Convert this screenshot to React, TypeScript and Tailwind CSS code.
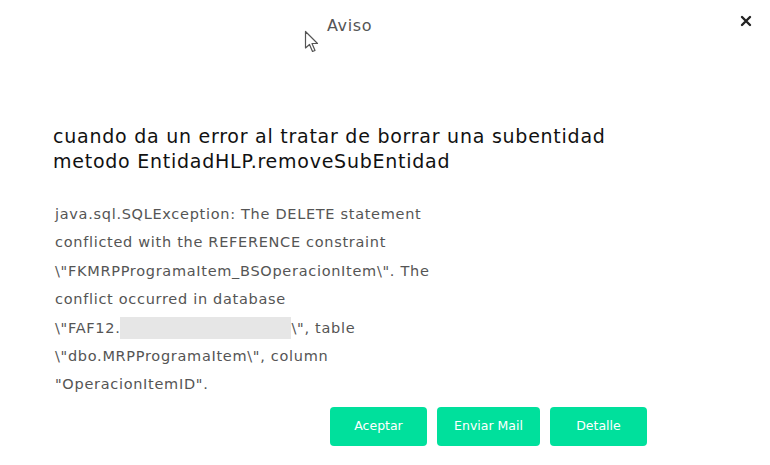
export default function App() {
  return (
    <div className="w-[770px] h-[465px] bg-white overflow-hidden" style={{ fontFamily: '"DejaVu Sans", sans-serif' }}>
      {/* header */}
      <div className="flex items-start h-[60px] pt-[14px]">
        <div className="w-[304px]" />
        <div className="flex items-start">
          <svg width="17" height="24" viewBox="0 0 17 24" className="mt-[16px]">
            <path d="M1.5 1.5 L1.5 18 L5.5 14.5 L8.5 21.5 L11 20.5 L8 13.5 L13.5 13.5 Z" fill="white" stroke="#555" strokeWidth="1.2" strokeLinejoin="round" />
          </svg>
          <span className="ml-[6px] text-[16px] tracking-[0.6px] text-[#555] leading-[24px]">Aviso</span>
        </div>
        <div className="flex-1" />
        <button className="mr-[18px] mt-[1px] text-[#222]">
          <svg width="12" height="12" viewBox="0 0 12 12">
            <path d="M2 2 L10 10 M10 2 L2 10" stroke="#222" strokeWidth="2.4" strokeLinecap="round" />
          </svg>
        </button>
      </div>

      {/* title */}
      <div className="pl-[53px] pt-[64px] text-[19px] tracking-[0.75px] leading-[25px] text-[#111]">
        <div>cuando da un error al tratar de borrar una subentidad</div>
        <div>metodo EntidadHLP.removeSubEntidad</div>
      </div>

      {/* body */}
      <div className="pl-[55px] pt-[26px] text-[14.5px] tracking-[0.7px] leading-[28.4px] text-[#555]">
        <div>java.sql.SQLException: The DELETE statement</div>
        <div>conflicted with the REFERENCE constraint</div>
        <div>\"FKMRPProgramaItem_BSOperacionItem\". The</div>
        <div>conflict occurred in database</div>
        <div className="flex items-center">
          <span>\"FAF12.</span>
          <span className="inline-block w-[171px] h-[22px] bg-[#e6e6e6]" />
          <span>\", table</span>
        </div>
        <div>\"dbo.MRPProgramaItem\", column</div>
        <div>"OperacionItemID".</div>
      </div>

      {/* buttons */}
      <div className="flex justify-end gap-[10px] pr-[123px] mt-[8px]">
        <button className="w-[97px] h-[39px] rounded-[4px] bg-[#00e09c] text-white text-[12.5px] font-medium">Aceptar</button>
        <button className="w-[103px] h-[39px] rounded-[4px] bg-[#00e09c] text-white text-[12.5px] font-medium">Enviar Mail</button>
        <button className="w-[97px] h-[39px] rounded-[4px] bg-[#00e09c] text-white text-[12.5px] font-medium">Detalle</button>
      </div>
    </div>
  );
}
